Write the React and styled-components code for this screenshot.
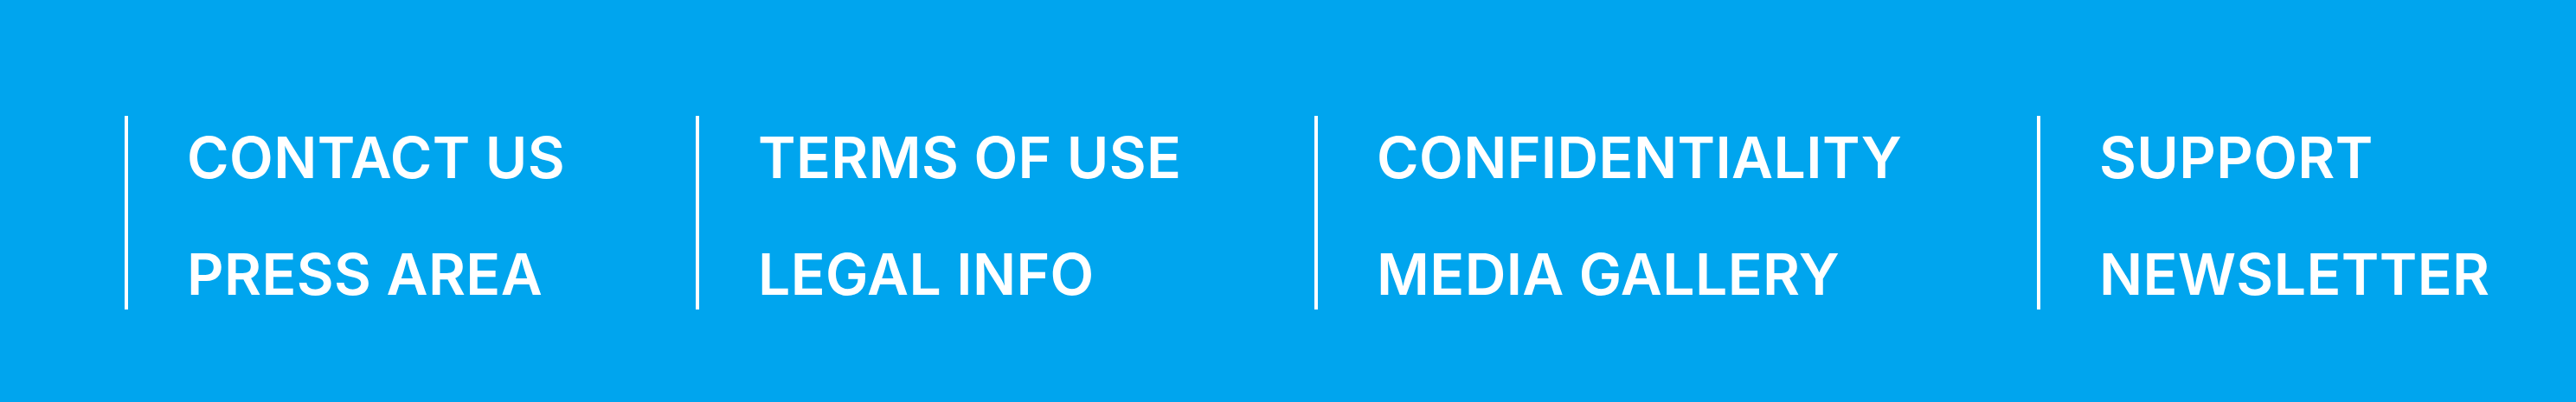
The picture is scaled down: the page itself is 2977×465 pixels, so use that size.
import React from "react";
import styled, { createGlobalStyle } from "styled-components";

const Global = createGlobalStyle`
  html, body { margin: 0; padding: 0; }
  body { background: #00a5ee; }
`;

const Footer = styled.footer`
  box-sizing: border-box;
  width: 2977px;
  height: 465px;
  background: #00a5ee;
  padding: 134px 0 0 144px;
`;

const Columns = styled.nav`
  display: grid;
  grid-template-columns: 660px 715px 835px auto;
`;

const Column = styled.ul`
  list-style: none;
  margin: 0;
  box-sizing: border-box;
  height: 224px;
  border-left: 4px solid #ffffff;
  padding: 10px 0 0 68px;
  display: flex;
  flex-direction: column;
  gap: 59px;
`;

const Item = styled.li`
  font-family: Inter, "Open Sans", sans-serif;
  font-weight: 600;
  font-size: 66px;
  line-height: 76px;
  color: #ffffff;
  letter-spacing: 0.4px;
  white-space: nowrap;
`;

const columns = [
  ["CONTACT US", "PRESS AREA"],
  ["TERMS OF USE", "LEGAL INFO"],
  ["CONFIDENTIALITY", "MEDIA GALLERY"],
  ["SUPPORT", "NEWSLETTER"],
];

export default function App() {
  return (
    <>
      <Global />
      <Footer>
        <Columns>
          {columns.map((col, i) => (
            <Column key={i}>
              {col.map((t) => (
                <Item key={t}>{t}</Item>
              ))}
            </Column>
          ))}
        </Columns>
      </Footer>
    </>
  );
}
